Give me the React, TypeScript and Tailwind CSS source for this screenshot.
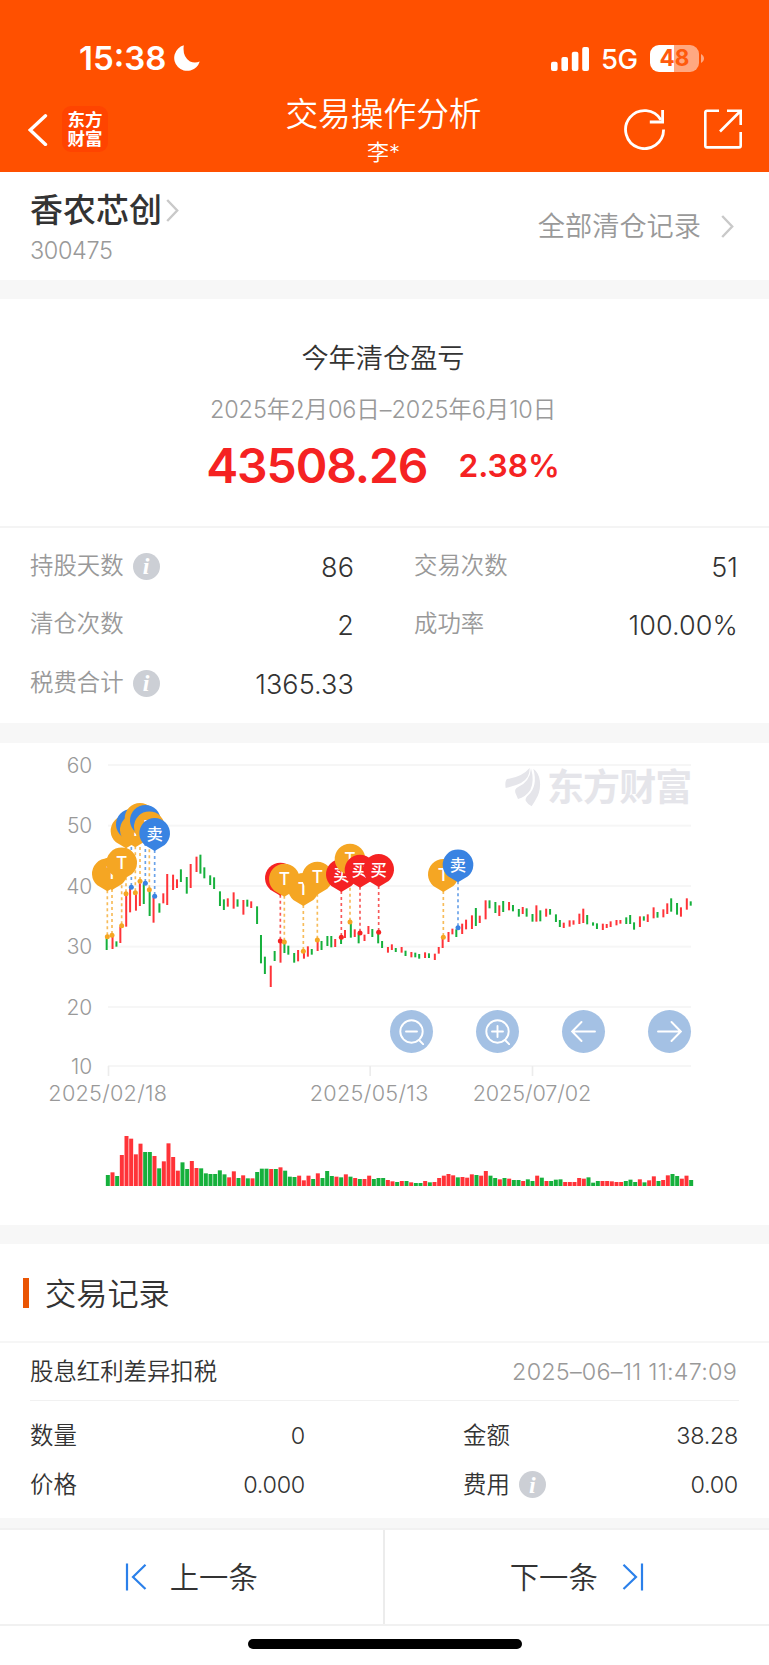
import type { ReactNode } from 'react';

type Side = 'T' | 'BUY' | 'SELL';

// [high, low, volume, up] in chart units (3 units = 1px)
const CANDLES: [number, number, number, 0 | 1][] = [
  [595, 630, 33, 0], [590, 627, 41, 1], [604, 620, 30, 0], [560, 609, 93, 1], [465, 560, 150, 1],
  [445, 517, 142, 1], [462, 512, 95, 1], [430, 498, 127, 1], [432, 492, 102, 0], [452, 528, 102, 0],
  [472, 548, 90, 1], [490, 518, 53, 0], [460, 490, 74, 1], [402, 495, 128, 1], [404, 450, 87, 1],
  [418, 444, 46, 1], [388, 426, 71, 0], [411, 461, 51, 0], [372, 444, 75, 1], [350, 396, 54, 1],
  [344, 401, 53, 0], [382, 415, 38, 0], [406, 435, 36, 0], [412, 447, 36, 0], [454, 498, 47, 0],
  [478, 510, 35, 0], [475, 500, 26, 1], [457, 506, 44, 1], [478, 500, 24, 0], [480, 524, 32, 1],
  [479, 500, 23, 0], [484, 504, 23, 1], [499, 552, 42, 0], [585, 670, 52, 0], [650, 702, 52, 0],
  [677, 741, 51, 1], [633, 663, 51, 0], [605, 668, 56, 1], [610, 639, 46, 0], [617, 644, 28, 0],
  [639, 668, 27, 0], [630, 664, 31, 1], [637, 656, 17, 1], [619, 650, 31, 1], [627, 644, 21, 0],
  [603, 633, 38, 1], [603, 630, 24, 0], [588, 618, 45, 0], [588, 622, 30, 0], [597, 621, 28, 1],
  [592, 612, 26, 0], [570, 594, 35, 1], [550, 593, 28, 0], [568, 591, 24, 1], [580, 610, 21, 0],
  [584, 603, 21, 1], [558, 582, 31, 1], [567, 591, 21, 0], [578, 610, 24, 0], [603, 624, 24, 0],
  [621, 638, 18, 1], [613, 630, 14, 1], [624, 636, 12, 0], [621, 638, 15, 1], [632, 648, 15, 0],
  [636, 652, 11, 1], [638, 652, 9, 0], [642, 656, 9, 0], [637, 654, 15, 1], [640, 654, 11, 0],
  [641, 660, 12, 1], [621, 641, 24, 1], [595, 624, 31, 1], [576, 606, 36, 1], [566, 583, 32, 1],
  [568, 591, 26, 0], [551, 582, 27, 1], [539, 568, 25, 1], [526, 567, 35, 1], [504, 558, 33, 0],
  [527, 549, 31, 1], [481, 538, 45, 1], [481, 505, 31, 0], [486, 519, 24, 0], [496, 528, 20, 1],
  [483, 516, 24, 0], [486, 511, 22, 1], [495, 514, 18, 0], [507, 530, 18, 0], [501, 522, 15, 1],
  [505, 530, 20, 0], [522, 545, 15, 0], [496, 545, 31, 1], [511, 544, 25, 0], [506, 530, 15, 1],
  [507, 524, 15, 0], [523, 546, 19, 0], [540, 561, 20, 0], [548, 564, 12, 1], [541, 560, 12, 1],
  [541, 554, 12, 1], [521, 552, 24, 1], [506, 549, 22, 1], [525, 553, 26, 0], [547, 557, 10, 0],
  [550, 567, 15, 0], [551, 570, 15, 1], [552, 564, 15, 1], [544, 561, 14, 1], [540, 556, 12, 1],
  [540, 551, 12, 1], [532, 552, 15, 0], [525, 552, 19, 0], [547, 569, 12, 0], [529, 561, 20, 1],
  [529, 542, 11, 0], [523, 546, 17, 1], [502, 535, 29, 1], [516, 533, 15, 0], [508, 532, 18, 1],
  [490, 522, 32, 1], [475, 515, 36, 0], [489, 524, 30, 0], [502, 530, 22, 1], [475, 509, 31, 1],
  [484, 497, 18, 0],
];

const TRADES: { x: number; y: number; side: Side }[] = [
  { x: 322, y: 590, side: 'T' },
  { x: 336, y: 586, side: 'T' },
  { x: 365, y: 557, side: 'T' },
  { x: 378, y: 461, side: 'T' },
  { x: 394, y: 442, side: 'SELL' },
  { x: 406, y: 458, side: 'T' },
  { x: 420, y: 424, side: 'T' },
  { x: 436, y: 430, side: 'SELL' },
  { x: 448, y: 449, side: 'T' },
  { x: 464, y: 469, side: 'SELL' },
  { x: 841, y: 603, side: 'BUY' },
  { x: 853, y: 606, side: 'T' },
  { x: 910, y: 634, side: 'T' },
  { x: 952, y: 600, side: 'T' },
  { x: 1024, y: 592, side: 'BUY' },
  { x: 1050, y: 546, side: 'T' },
  { x: 1080, y: 579, side: 'BUY' },
  { x: 1136, y: 577, side: 'BUY' },
  { x: 1330, y: 592, side: 'T' },
  { x: 1374, y: 563, side: 'SELL' },
];

const SIDE = {
  T: { color: '#f5a623', label: 'T' },
  BUY: { color: '#f52222', label: '买' },
  SELL: { color: '#3983e2', label: '卖' },
};

const GRID = [
  { y: 75, label: '60' },
  { y: 257, label: '50' },
  { y: 438, label: '40' },
  { y: 620, label: '30' },
  { y: 801, label: '20' },
  { y: 978, label: '10' },
];

const DATES = [
  { x: 326, textX: 323, label: '2025/02/18' },
  { x: 1111, textX: 1107, label: '2025/05/13' },
  { x: 1598, textX: 1596, label: '2025/07/02' },
];

const UP = '#ff3338';
const DOWN = '#16b03c';

const candleX = (i: number) => 320 + 5.86 * Math.floor(2.39 * i + 0.72);

function StatusBar() {
  return (
    <div className="flex h-[86px] items-end justify-between pr-[65px] pb-[11px] pl-[79px]">
      <div className="flex items-center gap-[7px]">
        <span className="w-[88px] text-[33px] leading-[34px] font-semibold">15:38</span>
        <svg width="26" height="26" viewBox="0 0 26 26" fill="#fff">
          <path d="M9.8 .3A13 13 0 1 0 25.7 16.4Q21 18.4 16 16.4Q8.2 12 9.8 .3Z" />
        </svg>
      </div>
      <div className="flex items-center">
        <svg width="38" height="24" viewBox="0 0 38 24" fill="#fff">
          <rect x="0" y="14.7" width="6.6" height="9.3" rx="2" />
          <rect x="10.4" y="10" width="6.6" height="14" rx="2" />
          <rect x="20.8" y="4.8" width="6.6" height="19.2" rx="2" />
          <rect x="31.2" y="0" width="6.8" height="24" rx="2" />
        </svg>
        <span className="mt-px ml-[12px] w-[37px] text-[27.5px] leading-[32px] font-medium tracking-[-0.6px]">5G</span>
        <div className="ml-[12px] flex h-[27px] w-[49px] items-center justify-center rounded-[9px] bg-linear-to-r from-white from-49% to-[#ffa881] to-49% text-[22.5px] leading-none font-bold text-[#ff5a0c]">
          48
        </div>
        <svg className="ml-[2px]" width="3" height="9" viewBox="0 0 3 9" fill="#ffa881">
          <path d="M0 0C4 2 4 7 0 9Z" />
        </svg>
      </div>
    </div>
  );
}

function Header() {
  return (
    <header className="h-[172px] bg-[#ff5000] text-white">
      <StatusBar />
      <div className="grid h-[86px] grid-cols-[1fr_auto_1fr] pr-[2px]">
        <div className="flex items-start pt-5 pl-[28px]">
          <svg className="mt-[8px]" width="20" height="32" viewBox="0 0 20 32" fill="none" stroke="#fff" strokeWidth="3.4" strokeLinecap="round">
            <path d="M17.5 1.8 2.2 16 17.5 30.4" />
          </svg>
          <div className="ml-[14px] flex h-[46px] w-[46px] flex-col items-center justify-center rounded-[9px] bg-[#ff4400] text-[17.5px] leading-[19px] font-bold">
            <span>东方</span>
            <span>财富</span>
          </div>
        </div>
        <div className="flex flex-col items-center">
          <h1 className="mt-[8px] text-[32.7px] leading-[40px] font-[350]">交易操作分析</h1>
          <p className="mt-[5px] text-[22px] leading-[26px] font-[350]">李*</p>
        </div>
        <div className="flex items-start justify-end gap-[37px] pt-[22px] pr-[24px]">
          <svg width="42" height="42" viewBox="0 0 42 42" fill="none" stroke="#fff" strokeWidth="2.8">
            <path d="M39.6 21.6A19 19 0 1 1 37 12" />
            <path d="M38.6 2V14H25.8" />
          </svg>
          <svg width="40" height="42" viewBox="0 0 40 42" fill="none" stroke="#fff" strokeWidth="2.6">
            <path d="M16 2.8H4Q2.3 2.8 2.3 4.5V37.7Q2.3 39.4 4 39.4H36Q37.7 39.4 37.7 37.7V24" />
            <path d="M24 2.8H37.7V17M37 3.5 17 23.5" />
          </svg>
        </div>
      </div>
    </header>
  );
}

function Chevron() {
  return (
    <svg width="13" height="23" viewBox="0 0 13 23" fill="none" stroke="#c9c9c9" strokeWidth="2.4">
      <path d="M1.2 1 11.2 11.5 1.2 22" />
    </svg>
  );
}

function InfoIcon() {
  return (
    <span className="flex h-[27px] w-[27px] items-center justify-center rounded-full bg-[#cccfd5] font-['Liberation_Serif',serif] text-[24px] leading-none font-bold text-white italic">
      i
    </span>
  );
}

function Divider() {
  return <div className="h-[19px] shrink-0 bg-[#f7f7f7]" />;
}

function StockRow() {
  return (
    <section className="flex h-[108px] justify-between pr-[35px] pl-[30px]">
      <div className="pt-[18px]">
        <div className="flex items-center gap-[4px]">
          <h2 className="text-[33px] leading-[40px] font-medium text-[#333]">香农芯创</h2>
          <Chevron />
        </div>
        <p className="mt-[6px] text-[23.5px] leading-[30px] font-light tracking-[-0.4px] text-[#999]">300475</p>
      </div>
      <div className="flex items-center gap-[20px]">
        <span className="mt-[2px] text-[27.2px] leading-[40px] font-[350] text-[#999]">全部清仓记录</span>
        <Chevron />
      </div>
    </section>
  );
}

function Profit() {
  return (
    <section className="flex h-[229px] flex-col items-center border-b-2 border-[#f4f4f4] pr-[3px]">
      <h3 className="mt-[40px] text-[27.2px] leading-[40px] font-[350] text-[#333]">今年清仓盈亏</h3>
      <p className="mt-[15px] text-[23.5px] leading-[32px] font-[350] tracking-[-0.1px] whitespace-nowrap text-[#999]">
        2025年2月06日–2025年6月10日
      </p>
      <div className="mt-[14px] flex items-center gap-[31px] leading-[52px] font-[560] text-[#f52222]">
        <span className="text-[48px] tracking-[-1.1px]">43508.26</span>
        <span className="text-[31.7px]">2.38%</span>
      </div>
    </section>
  );
}

function Stat({ label, value, info }: { label: string; value: string; info?: boolean }) {
  return (
    <div className="flex h-[58.6px] items-center">
      <span className="mt-[-4px] text-[23.4px] font-[350] text-[#999]">{label}</span>
      {info && <span className="mt-[-2px] ml-[9px]"><InfoIcon /></span>}
      <span className="mt-px ml-auto text-[27px] font-[350] tracking-[0.1px] text-[#333]">{value}</span>
    </div>
  );
}

function Stats() {
  return (
    <section className="grid h-[195px] grid-cols-[324px_324px] content-start gap-x-[60px] pt-[10px] pl-[30px]">
      <Stat label="持股天数" value="86" info />
      <Stat label="交易次数" value="51" />
      <Stat label="清仓次数" value="2" />
      <Stat label="成功率" value="100.00%" />
      <Stat label="税费合计" value="1365.33" info />
    </section>
  );
}

function Pin({ x, y, side }: { x: number; y: number; side: Side }) {
  const { color, label } = SIDE[side];
  const cy = y - 189;
  return (
    <g>
      <path d={`M${x} ${cy + 53}L${x - 30} ${cy + 35}A46 46 0 1 1 ${x + 30} ${cy + 35}Z`} fill={color} />
      <text x={x} y={cy + 19} textAnchor="middle" fontSize={side === 'T' ? 52 : 49} fontWeight="500" fill="#fff">
        {label}
      </text>
    </g>
  );
}

function ChartButton({ children }: { children: ReactNode }) {
  return (
    <button className="flex h-[43px] w-[43px] items-center justify-center rounded-full bg-[#a4c1e4]">
      <svg width="25" height="27" viewBox="0 0 25 27" fill="none" stroke="#fff" strokeWidth="1.9" strokeLinecap="round">
        {children}
      </svg>
    </button>
  );
}

function Chart() {
  return (
    <section className="relative h-[482px]">
      <svg width="769" height="482" viewBox="0 9 2307 1446" className="block">
        {GRID.map(g => (
          <g key={g.label}>
            <rect x="324" y={g.y - 3} width="1749" height="6" fill="#f6f6f6" />
            <text x="277" y={g.y + 23} textAnchor="end" fontSize="63" fontWeight="350" fill="#999">{g.label}</text>
          </g>
        ))}
        {DATES.map(d => (
          <g key={d.label}>
            <rect x={d.x - 3} y="978" width="5" height="30" fill="#ececec" />
            <text x={d.textX} y="1083" textAnchor="middle" textLength="356" fontSize="65" fontWeight="350" fill="#999">{d.label}</text>
          </g>
        ))}

        {/* watermark */}
        <g fill="#e5e5ea">
          <path d="M1517 144C1515 132 1516 122 1521 117Q1565 112 1589 84Q1590 114 1563 129Q1545 138 1517 144Z" />
          <path d="M1593 85Q1604 125 1591 150Q1576 172 1554 177L1546 158Q1543 147 1553 142Q1590 126 1593 85Z" />
          <path d="M1600 86C1622 100 1626 140 1613 168Q1605 184 1595 199Q1581 190 1577 182Q1575 174 1585 165Q1614 138 1600 86Z" />
          <text x="1641" y="184" fontSize="111" fontWeight="700" textLength="436">东方财富</text>
        </g>

        {CANDLES.map(([high, low, volume, up], i) => (
          <g key={i} fill={up ? UP : DOWN}>
            <rect x={candleX(i) - 3} y={high} width="6" height={low - high} />
            <rect x={317.5 + 14 * i} y={1338 - volume} width="12" height={volume} />
          </g>
        ))}

        {TRADES.map((t, i) => (
          <g key={i}>
            <line x1={t.x} x2={t.x} y1={t.y - 4} y2={t.y - 140} stroke={SIDE[t.side].color} strokeWidth="5" strokeDasharray="9 9" opacity="0.75" />
            <circle cx={t.x} cy={t.y} r="7.5" fill={SIDE[t.side].color} />
          </g>
        ))}
        {TRADES.map((t, i) => <Pin key={i} {...t} />)}
      </svg>

      <div className="absolute top-[267px] left-[390px] flex gap-[43px]">
        <ChartButton>
          <circle cx="12.5" cy="13.5" r="11.2" />
          <path d="M7 13.5H18M20 22 24.4 26.4" />
        </ChartButton>
        <ChartButton>
          <circle cx="12.5" cy="13.5" r="11.2" />
          <path d="M7 13.5H18M12.5 8V19M20 22 24.4 26.4" />
        </ChartButton>
        <ChartButton>
          <path d="M24 13.5H1.2M10.5 4 1.2 13.5 10.5 23" />
        </ChartButton>
        <ChartButton>
          <path d="M1 13.5H23.8M14.5 4 23.8 13.5 14.5 23" />
        </ChartButton>
      </div>
    </section>
  );
}

function RecordField({ label, value, info }: { label: string; value: string; info?: boolean }) {
  return (
    <div className="flex h-[49px] items-center">
      <span>{label}</span>
      {info && <span className="ml-[9px]"><InfoIcon /></span>}
      <span className="ml-auto tracking-[-0.3px]">{value}</span>
    </div>
  );
}

function Records() {
  return (
    <section className="text-[23.4px] font-[350] text-[#333]">
      <div className="flex h-[99px] items-center border-b-2 border-[#f6f6f6] pl-[23px]">
        <span className="mt-px h-[30px] w-[6px] bg-[#ea5504]" />
        <h3 className="mt-[4px] ml-[16px] text-[31.2px] leading-none">交易记录</h3>
      </div>
      <div className="mx-[30px] flex h-[58px] items-center justify-between border-b border-[#f1f1f1]">
        <span>股息红利差异扣税</span>
        <span className="mr-[2px] font-light tracking-[0.2px] text-[#999]">2025–06–11 11:47:09</span>
      </div>
      <div className="grid h-[117px] grid-cols-[275px_275px] content-start gap-x-[158px] pt-[10px] pl-[30px]">
        <RecordField label="数量" value="0" />
        <RecordField label="金额" value="38.28" />
        <RecordField label="价格" value="0.000" />
        <RecordField label="费用" value="0.00" info />
      </div>
    </section>
  );
}

function BottomNav() {
  return (
    <nav className="grid h-[98px] grid-cols-2 border-y-2 border-[#f1f1f1] text-[29.3px] font-[350] text-[#333]">
      <button className="flex items-center justify-center gap-[23px] border-r-2 border-[#ececec]">
        <svg width="22" height="28" viewBox="0 0 22 28" fill="none" stroke="#2b80ea" strokeWidth="2.2">
          <path d="M2 .5V27.5M20.5 1.8 8 14 20.5 26" />
        </svg>
        <span className="mt-[2px]">上一条</span>
      </button>
      <button className="flex items-center justify-center gap-[24px]">
        <span className="mt-[2px]">下一条</span>
        <svg width="22" height="28" viewBox="0 0 22 28" fill="none" stroke="#2b80ea" strokeWidth="2.2">
          <path d="M20 .5V27.5M1.5 1.8 14 14 1.5 26" />
        </svg>
      </button>
    </nav>
  );
}

export default function App() {
  return (
    <div className="flex h-[1665px] w-[769px] flex-col overflow-hidden bg-white font-['Inter','Noto_Sans_CJK_SC',sans-serif]">
      <Header />
      <StockRow />
      <Divider />
      <Profit />
      <Stats />
      <div className="h-[20px] bg-[#f7f7f7]" />
      <Chart />
      <Divider />
      <Records />
      <div className="h-[10px] bg-[#f7f7f7]" />
      <BottomNav />
      <div className="flex justify-center pt-[13px]">
        <div className="h-[10px] w-[274px] rounded-full bg-black" />
      </div>
    </div>
  );
}
